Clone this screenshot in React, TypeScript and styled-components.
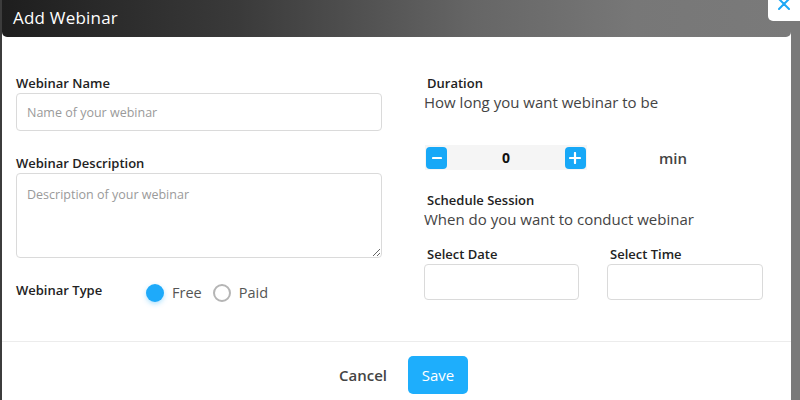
import React, { useState } from "react";
import styled, { createGlobalStyle } from "styled-components";

const GlobalStyle = createGlobalStyle`
  html, body {
    margin: 0;
    padding: 0;
    background: #ffffff;
  }
  * {
    box-sizing: border-box;
  }
`;

const Screen = styled.div`
  position: relative;
  display: flex;
  width: 800px;
  height: 400px;
  overflow: hidden;
  font-family: "Open Sans", "Liberation Sans", sans-serif;
`;

const Edge = styled.div<{ $color: string; $width: number }>`
  flex: 0 0 ${(p) => p.$width}px;
  background: ${(p) => p.$color};
`;

const Modal = styled.div`
  flex: 1;
  display: flex;
  flex-direction: column;
  background: #ffffff;
`;

const Header = styled.div`
  height: 37px;
  display: flex;
  align-items: center;
  padding: 0 0 3px 11px;
  background: linear-gradient(90deg, #1e1e1e 0%, #3a3a3a 30%, #666666 60%, #777777 80%, #7a7a7a 100%);
  border-radius: 0 0 5px 5px;
`;

const Title = styled.h2`
  margin: 0;
  color: #ffffff;
  font-size: 17px;
  font-weight: 500;
  letter-spacing: 0.2px;
`;

const CloseButton = styled.button`
  position: absolute;
  top: 0;
  right: 0;
  width: 32px;
  height: 21px;
  border: none;
  padding: 0;
  background: #ffffff;
  border-radius: 0 0 0 5px;
  display: flex;
  justify-content: center;
  align-items: flex-start;
`;

const Body = styled.div`
  flex: 1;
  display: grid;
  grid-template-columns: 366px 340px;
  column-gap: 42px;
  padding: 38px 0 0 14px;
  border-bottom: 1px solid #ececec;
`;

const Column = styled.div`
  display: flex;
  flex-direction: column;
`;

const Label = styled.label<{ $indent?: number; $top?: number }>`
  display: block;
  height: 16px;
  line-height: 16px;
  margin: ${(p) => p.$top ?? 0}px 0 2px ${(p) => p.$indent ?? 0}px;
  font-size: 13px;
  font-weight: 600;
  color: #222222;
  white-space: nowrap;
`;

const TextInput = styled.input<{ $height?: number }>`
  width: 100%;
  height: ${(p) => p.$height ?? 38}px;
  border: 1px solid #dadada;
  border-radius: 4px;
  padding: 0 10px;
  font-family: inherit;
  font-size: 12.5px;
  color: #333;
  outline: none;
  &::placeholder {
    color: #9a9a9a;
  }
`;

const TextArea = styled.textarea`
  width: 100%;
  height: 85px;
  border: 1px solid #dadada;
  border-radius: 4px;
  padding: 12px 10px;
  font-family: inherit;
  font-size: 12.5px;
  color: #333;
  resize: vertical;
  outline: none;
  &::placeholder {
    color: #9a9a9a;
  }
`;

const TypeRow = styled.div`
  display: flex;
  align-items: flex-start;
  margin-top: 22px;
`;

const TypeLabel = styled(Label)`
  flex: 0 0 130px;
  margin: 2px 0 0 0;
`;

const RadioGroup = styled.div`
  display: flex;
  align-items: center;
  margin-top: 3px;
`;

const RadioOption = styled.label`
  display: flex;
  align-items: center;
  margin-right: 11px;
  font-size: 14.5px;
  color: #555555;
  cursor: pointer;
`;

const RadioCircle = styled.span<{ $checked: boolean }>`
  width: 18px;
  height: 18px;
  border-radius: 50%;
  margin-right: 8px;
  background: ${(p) => (p.$checked ? "#1eaafa" : "#ffffff")};
  border: ${(p) => (p.$checked ? "none" : "2px solid #b5b5b5")};
  box-shadow: ${(p) => (p.$checked ? "0 2px 5px rgba(30, 170, 250, 0.35)" : "none")};
`;

const Hint = styled.p`
  margin: 0;
  height: 18px;
  line-height: 18px;
  font-size: 15px;
  color: #444444;
  white-space: nowrap;
`;

const DurationRow = styled.div`
  display: flex;
  align-items: center;
  margin-top: 34px;
`;

const Counter = styled.div`
  display: flex;
  align-items: center;
  justify-content: space-between;
  width: 162px;
  height: 25px;
  margin-left: 1px;
  padding: 0 1px;
  background: #f5f5f5;
`;

const StepButton = styled.button`
  width: 21px;
  height: 22px;
  border: none;
  border-radius: 4px;
  padding: 0;
  background: #17a8f7;
  display: flex;
  align-items: center;
  justify-content: center;
`;

const CountValue = styled.span`
  font-size: 14px;
  font-weight: 700;
  color: #111111;
`;

const Unit = styled.span`
  margin-left: 72px;
  font-size: 15px;
  font-weight: 600;
  color: #444444;
`;

const DateRow = styled.div`
  display: grid;
  grid-template-columns: 155px 156px;
  column-gap: 28px;
  margin-top: 18px;
`;

const Footer = styled.div`
  height: 58px;
  display: flex;
  justify-content: center;
  align-items: flex-start;
  gap: 21px;
  padding: 14px 0 0 14px;
`;

const CancelButton = styled.button`
  height: 38px;
  border: none;
  background: transparent;
  padding: 0;
  font-family: inherit;
  font-size: 15px;
  font-weight: 600;
  color: #444444;
`;

const SaveButton = styled.button`
  width: 60px;
  height: 38px;
  border: none;
  border-radius: 5px;
  background: #1eaefc;
  color: #ffffff;
  font-family: inherit;
  font-size: 15px;
  font-weight: 500;
`;

const App: React.FC = () => {
  const [type, setType] = useState<"free" | "paid">("free");
  const [duration, setDuration] = useState(0);

  return (
    <>
      <GlobalStyle />
      <Screen>
        <Edge $color="#3c3c3c" $width={2} />
        <Modal>
          <Header>
            <Title>Add Webinar</Title>
          </Header>
          <Body>
            <Column>
              <Label>Webinar Name</Label>
              <TextInput placeholder="Name of your webinar" />
              <Label $top={24}>Webinar Description</Label>
              <TextArea placeholder="Description of your webinar" />
              <TypeRow>
                <TypeLabel>Webinar Type</TypeLabel>
                <RadioGroup>
                  <RadioOption onClick={() => setType("free")}>
                    <RadioCircle $checked={type === "free"} />
                    Free
                  </RadioOption>
                  <RadioOption onClick={() => setType("paid")}>
                    <RadioCircle $checked={type === "paid"} />
                    Paid
                  </RadioOption>
                </RadioGroup>
              </TypeRow>
            </Column>
            <Column>
              <Label $indent={3}>Duration</Label>
              <Hint>How long you want webinar to be</Hint>
              <DurationRow>
                <Counter>
                  <StepButton onClick={() => setDuration(Math.max(0, duration - 1))}>
                    <svg width="10" height="10" viewBox="0 0 10 10">
                      <path d="M1 5h8" stroke="#fff" strokeWidth="2.2" strokeLinecap="round" />
                    </svg>
                  </StepButton>
                  <CountValue>{duration}</CountValue>
                  <StepButton onClick={() => setDuration(duration + 1)}>
                    <svg width="12" height="12" viewBox="0 0 12 12">
                      <path d="M6 1v10M1 6h10" stroke="#fff" strokeWidth="2.2" strokeLinecap="round" />
                    </svg>
                  </StepButton>
                </Counter>
                <Unit>min</Unit>
              </DurationRow>
              <Label $indent={3} $top={22}>
                Schedule Session
              </Label>
              <Hint>When do you want to conduct webinar</Hint>
              <DateRow>
                <Column>
                  <Label $indent={3}>Select Date</Label>
                  <TextInput $height={36} />
                </Column>
                <Column>
                  <Label $indent={3}>Select Time</Label>
                  <TextInput $height={36} />
                </Column>
              </DateRow>
            </Column>
          </Body>
          <Footer>
            <CancelButton>Cancel</CancelButton>
            <SaveButton>Save</SaveButton>
          </Footer>
        </Modal>
        <Edge $color="#7a7a7a" $width={9} />
        <CloseButton aria-label="Close">
          <svg width="12" height="12" viewBox="0 0 12 12" style={{ marginTop: -2 }}>
            <path d="M1 1l10 10M11 1L1 11" stroke="#1ea8f5" strokeWidth="2" strokeLinecap="round" />
          </svg>
        </CloseButton>
      </Screen>
    </>
  );
};

export default App;
